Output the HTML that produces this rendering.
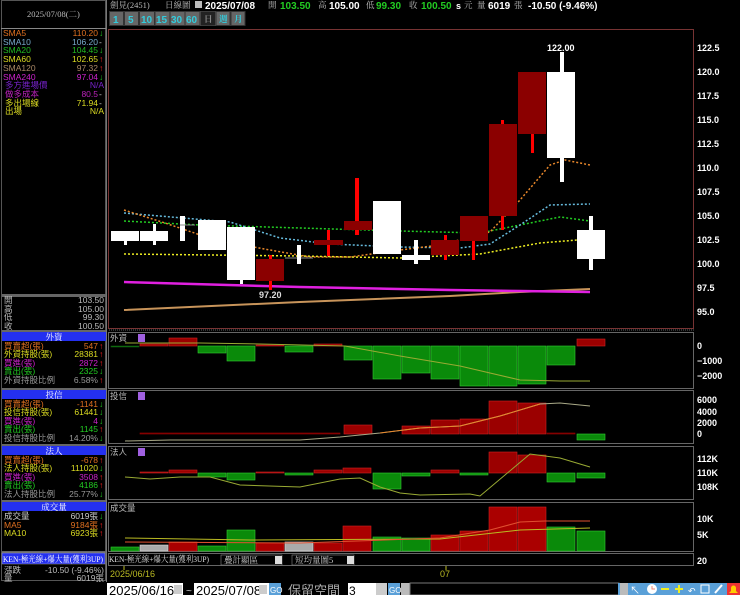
<!DOCTYPE html>
<html><head><meta charset="utf-8"><style>
html,body{margin:0;padding:0;background:#000;width:740px;height:595px;overflow:hidden}
svg{display:block}
text{font-family:"Liberation Sans","Noto Sans CJK TC",sans-serif}
.s{font-family:"Liberation Serif","Noto Serif CJK SC",serif;font-size:8.5px}
.ax{fill:#fff;font-size:9px;font-weight:bold}
</style></head><body>
<svg width="740" height="595" viewBox="0 0 740 595" xmlns="http://www.w3.org/2000/svg">
<rect width="740" height="595" fill="#000"/>
<rect x="1.5" y="0.5" width="104" height="580" fill="none" stroke="#555"/>
<line x1="106.5" y1="0" x2="106.5" y2="582" stroke="#777"/>
<text x="27" y="17" class="s" fill="#bbb">2025/07/08(二)</text>
<line x1="1" y1="28.5" x2="106" y2="28.5" stroke="#888"/>
<g class="s">
<text x="3" y="36" fill="#e07020">SMA5</text><text x="98" y="36" text-anchor="end" fill="#e07020">110.20</text><text x="99" y="36" fill="#2c2">↓</text>
<text x="3" y="45" fill="#7ac">SMA10</text><text x="98" y="45" text-anchor="end" fill="#7ac">106.20</text><text x="99" y="45" fill="#ccc">-</text>
<text x="3" y="53" fill="#2b2">SMA20</text><text x="98" y="53" text-anchor="end" fill="#2b2">104.45</text><text x="99" y="53" fill="#2c2">↓</text>
<text x="3" y="62" fill="#dd2">SMA60</text><text x="98" y="62" text-anchor="end" fill="#dd2">102.65</text><text x="99" y="62" fill="#f22">↑</text>
<text x="3" y="71" fill="#a86">SMA120</text><text x="98" y="71" text-anchor="end" fill="#a86">97.32</text><text x="99" y="71" fill="#f22">↑</text>
<text x="3" y="80" fill="#c2c">SMA240</text><text x="98" y="80" text-anchor="end" fill="#c2c">97.04</text><text x="99" y="80" fill="#2c2">↓</text>
<text x="5" y="88" fill="#72c">多方進場價</text><text x="104" y="88" text-anchor="end" fill="#72c">N/A</text>
<text x="5" y="97" fill="#b2b">做多成本</text><text x="98" y="97" text-anchor="end" fill="#b2b">80.5</text><text x="99" y="97" fill="#ccc">-</text>
<text x="5" y="106" fill="#dd2">多出場線</text><text x="98" y="106" text-anchor="end" fill="#dd2">71.94</text><text x="99" y="106" fill="#ccc">-</text>
<text x="5" y="114" fill="#dd2">出場</text><text x="104" y="114" text-anchor="end" fill="#dd2">N/A</text>
</g>
<rect x="2" y="294" width="104" height="3" fill="#666"/>
<g class="s" fill="#bbb">
<text x="4" y="303">開</text><text x="104" y="303" text-anchor="end">103.50</text>
<text x="4" y="312">高</text><text x="104" y="312" text-anchor="end">105.00</text>
<text x="4" y="320">低</text><text x="104" y="320" text-anchor="end">99.30</text>
<text x="4" y="329">收</text><text x="104" y="329" text-anchor="end">100.50</text>
</g>
<rect x="2" y="330" width="104" height="2" fill="#666"/>
<rect x="2" y="332" width="104" height="9" fill="#2430f0"/><text x="54" y="340" class="s" fill="#fff" text-anchor="middle">外資</text>
<g class="s">
<text x="4" y="349" fill="#e07020">買賣超(張)</text><text x="98" y="349" text-anchor="end" fill="#e07020">547</text><text x="99" y="349" fill="#f22">↑</text>
<text x="4" y="357" fill="#dd2">外資持股(張)</text><text x="98" y="357" text-anchor="end" fill="#dd2">28381</text><text x="99" y="357" fill="#f22">↑</text>
<text x="4" y="366" fill="#c2c">買進(張)</text><text x="98" y="366" text-anchor="end" fill="#c2c">2872</text><text x="99" y="366" fill="#f22">↑</text>
<text x="4" y="374" fill="#2c2">賣出(張)</text><text x="98" y="374" text-anchor="end" fill="#2c2">2325</text><text x="99" y="374" fill="#2c2">↓</text>
<text x="4" y="383" fill="#999">外資持股比例</text><text x="98" y="383" text-anchor="end" fill="#999">6.58%</text><text x="99" y="383" fill="#f22">↑</text>
</g>
<rect x="2" y="388" width="104" height="2" fill="#666"/>
<rect x="2" y="390" width="104" height="9" fill="#2430f0"/><text x="54" y="398" class="s" fill="#fff" text-anchor="middle">投信</text>
<g class="s">
<text x="4" y="407" fill="#e07020">買賣超(張)</text><text x="98" y="407" text-anchor="end" fill="#e07020">-1141</text><text x="99" y="407" fill="#2c2">↓</text>
<text x="4" y="415" fill="#dd2">投信持股(張)</text><text x="98" y="415" text-anchor="end" fill="#dd2">61441</text><text x="99" y="415" fill="#2c2">↓</text>
<text x="4" y="424" fill="#c2c">買進(張)</text><text x="98" y="424" text-anchor="end" fill="#c2c">4</text><text x="99" y="424" fill="#2c2">↓</text>
<text x="4" y="432" fill="#2c2">賣出(張)</text><text x="98" y="432" text-anchor="end" fill="#2c2">1145</text><text x="99" y="432" fill="#f22">↑</text>
<text x="4" y="441" fill="#999">投信持股比例</text><text x="98" y="441" text-anchor="end" fill="#999">14.20%</text><text x="99" y="441" fill="#2c2">↓</text>
</g>
<rect x="2" y="444" width="104" height="2" fill="#666"/>
<rect x="2" y="446" width="104" height="9" fill="#2430f0"/><text x="54" y="454" class="s" fill="#fff" text-anchor="middle">法人</text>
<g class="s">
<text x="4" y="463" fill="#e07020">買賣超(張)</text><text x="98" y="463" text-anchor="end" fill="#e07020">-678</text><text x="99" y="463" fill="#f22">↑</text>
<text x="4" y="471" fill="#dd2">法人持股(張)</text><text x="98" y="471" text-anchor="end" fill="#dd2">111020</text><text x="99" y="471" fill="#2c2">↓</text>
<text x="4" y="480" fill="#c2c">買進(張)</text><text x="98" y="480" text-anchor="end" fill="#c2c">3508</text><text x="99" y="480" fill="#f22">↑</text>
<text x="4" y="488" fill="#2c2">賣出(張)</text><text x="98" y="488" text-anchor="end" fill="#2c2">4186</text><text x="99" y="488" fill="#f22">↑</text>
<text x="4" y="497" fill="#999">法人持股比例</text><text x="98" y="497" text-anchor="end" fill="#999">25.77%</text><text x="99" y="497" fill="#2c2">↓</text>
</g>
<rect x="2" y="500" width="104" height="2" fill="#666"/>
<rect x="2" y="502" width="104" height="9" fill="#2430f0"/><text x="54" y="510" class="s" fill="#fff" text-anchor="middle">成交量</text>
<g class="s">
<text x="4" y="519" fill="#ccc">成交量</text><text x="98" y="519" text-anchor="end" fill="#ccc">6019張</text><text x="99" y="519" fill="#2c2">↓</text>
<text x="4" y="528" fill="#e07020">MA5</text><text x="98" y="528" text-anchor="end" fill="#e07020">9184張</text><text x="99" y="528" fill="#f22">↑</text>
<text x="4" y="536" fill="#dd2">MA10</text><text x="98" y="536" text-anchor="end" fill="#dd2">6923張</text><text x="99" y="536" fill="#f22">↑</text>
</g>
<rect x="2" y="551" width="104" height="2" fill="#666"/>
<rect x="2" y="553" width="103" height="11" fill="#2430f0" stroke="#aaa" stroke-width="0.5"/><text x="3" y="562" class="s" fill="#fff" textLength="100" lengthAdjust="spacingAndGlyphs">KEN-極光線+爆大量(獲利3UP)</text>
<g class="s" fill="#bbb"><text x="4" y="573">漲跌</text><text x="104" y="573" text-anchor="end">-10.50 (-9.46%)</text>
<text x="4" y="581">量</text><text x="104" y="581" text-anchor="end">6019張</text></g>

<text x="110" y="8" class="s" fill="#bbb">劍見(2451)</text>
<text x="165" y="8" class="s" fill="#bbb">日線圖</text>
<rect x="195" y="1" width="7" height="7" fill="#bbb"/>
<text x="205" y="9" font-size="10" font-weight="bold" fill="#fff">2025/07/08</text>
<text x="268" y="8" class="s" fill="#bbb">開</text><text x="280" y="9" font-size="10" font-weight="bold" fill="#2c2">103.50</text>
<text x="318" y="8" class="s" fill="#bbb">高</text><text x="329" y="9" font-size="10" font-weight="bold" fill="#fff">105.00</text>
<text x="366" y="8" class="s" fill="#bbb">低</text><text x="376" y="9" font-size="10" font-weight="bold" fill="#2c2">99.30</text>
<text x="409" y="8" class="s" fill="#bbb">收</text><text x="421" y="9" font-size="10" font-weight="bold" fill="#2c2">100.50</text>
<text x="456" y="9" font-size="9" font-weight="bold" fill="#fff">s</text><text x="464" y="8" class="s" fill="#bbb">元</text>
<text x="477" y="8" class="s" fill="#bbb">量</text><text x="488" y="9" font-size="10" font-weight="bold" fill="#fff">6019</text><text x="514" y="8" class="s" fill="#bbb">張</text>
<text x="528" y="9" font-size="10" font-weight="bold" fill="#fff">-10.50 (-9.46%)</text>
<g font-size="10" font-weight="bold" fill="#3cd">
<rect x="109" y="11" width="136" height="15" fill="#555"/>
<rect x="109.5" y="11.5" width="14" height="14" fill="#666" stroke="#333"/><text x="113" y="23">1</text>
<rect x="124.5" y="11.5" width="14" height="14" fill="#666" stroke="#333"/><text x="128" y="23">5</text>
<rect x="139.5" y="11.5" width="15" height="14" fill="#666" stroke="#333"/><text x="141" y="23">10</text>
<rect x="155" y="11.5" width="15" height="14" fill="#666" stroke="#333"/><text x="156" y="23">15</text>
<rect x="170" y="11.5" width="15" height="14" fill="#666" stroke="#333"/><text x="171" y="23">30</text>
<rect x="185" y="11.5" width="15" height="14" fill="#666" stroke="#333"/><text x="186" y="23">60</text>
<rect x="201" y="11.5" width="14" height="14" fill="#222"/><text x="204" y="22" class="s" fill="#888">日</text>
<rect x="216" y="11.5" width="14" height="14" fill="#666" stroke="#333"/><text x="219" y="22" class="s">週</text>
<rect x="231" y="11.5" width="14" height="14" fill="#666" stroke="#333"/><text x="234" y="22" class="s">月</text>
</g>

<rect x="108.5" y="29.5" width="585" height="299" fill="none" stroke="#733"/>
<g class="ax">
<text x="697" y="51">122.5</text><text x="697" y="75">120.0</text><text x="697" y="99">117.5</text><text x="697" y="123">115.0</text><text x="697" y="147">112.5</text><text x="697" y="171">110.0</text><text x="697" y="195">107.5</text><text x="697" y="219">105.0</text><text x="697" y="243">102.5</text><text x="697" y="267">100.0</text><text x="697" y="291">97.5</text><text x="697" y="315">95.0</text>
</g>
<line x1="109" y1="330" x2="694" y2="330" stroke="#666" stroke-dasharray="1 1"/>
<polyline points="124,310 300,302 450,296 520,292 590,289" fill="none" stroke="#c8945a" stroke-width="2"/>
<polyline points="124,282 300,287 450,290 520,291 590,292" fill="none" stroke="#e020e0" stroke-width="2.5"/>
<g fill="none" stroke-width="1.5" stroke-dasharray="2 2">
<polyline stroke="#ee2" points="124,254 300,256 400,258 480,254 540,243 590,239"/>
<polyline stroke="#2c2" points="124,221 200,225 300,228 400,231 480,233 520,225 560,217 590,221"/>
<polyline stroke="#6bd" points="124,213 230,222 280,238 330,244 400,247 460,248 490,244 520,225 550,205 590,204"/>
<polyline stroke="#e8872a" points="124,210 165,223 215,240 270,250 310,257 350,257 400,250 440,245 490,232 520,200 550,165 565,160 590,165"/>
</g>
<g>
<rect x="124" y="240" width="3" height="5" fill="#fff"/><rect x="111" y="231" width="28" height="10" fill="#fff"/>
<rect x="153" y="224" width="3" height="21" fill="#fff"/><rect x="140" y="231" width="28" height="10" fill="#fff"/>
<rect x="180" y="216" width="5" height="25" fill="#fff"/><line x1="180" y1="225" x2="195" y2="225" stroke="#888"/>
<rect x="198" y="220" width="28" height="30" fill="#fff"/>
<rect x="240" y="279" width="3" height="5" fill="#fff"/><rect x="227" y="227" width="28" height="53" fill="#fff"/>
<rect x="269" y="255" width="3" height="35" fill="#f00"/><rect x="256" y="259" width="28" height="22" fill="#8b0000"/>
<line x1="285" y1="258" x2="313" y2="258" stroke="#888"/><rect x="297" y="245" width="4" height="19" fill="#fff"/>
<rect x="327" y="230" width="3" height="26" fill="#f00"/><rect x="314" y="240" width="29" height="5" fill="#8b0000"/>
<rect x="355" y="178" width="4" height="57" fill="#f00"/><rect x="344" y="221" width="28" height="9" fill="#8b0000"/>
<rect x="373" y="201" width="28" height="53" fill="#fff"/>
<rect x="414" y="240" width="4" height="24" fill="#fff"/><rect x="402" y="255" width="28" height="5" fill="#fff"/>
<rect x="444" y="235" width="3" height="25" fill="#f00"/><rect x="431" y="240" width="28" height="15" fill="#8b0000"/>
<rect x="472" y="240" width="3" height="20" fill="#f00"/><rect x="460" y="216" width="28" height="25" fill="#8b0000"/>
<rect x="501" y="120" width="3" height="110" fill="#f00"/><rect x="489" y="124" width="28" height="92" fill="#8b0000"/>
<rect x="531" y="133" width="3" height="20" fill="#f00"/><rect x="518" y="72" width="28" height="62" fill="#8b0000"/>
<rect x="560" y="52" width="4" height="130" fill="#fff"/><rect x="547" y="72" width="28" height="86" fill="#fff"/>
<rect x="589" y="216" width="4" height="54" fill="#fff"/><rect x="577" y="230" width="28" height="29" fill="#fff"/>
</g>
<text x="547" y="51" font-size="9" font-weight="bold" fill="#fff">122.00</text>
<text x="259" y="298" font-size="9" font-weight="bold" fill="#ddd">97.20</text>

<g fill="none" stroke="#666">
<rect x="108.5" y="332.5" width="585" height="56"/>
<rect x="108.5" y="390.5" width="585" height="53"/>
<rect x="108.5" y="446.5" width="585" height="53"/>
<rect x="108.5" y="502.5" width="585" height="49"/>
<rect x="108.5" y="553.5" width="585" height="12"/>
</g>
<g class="s" fill="#bbb"><text x="110" y="341">外資</text><text x="110" y="399">投信</text><text x="110" y="455">法人</text><text x="110" y="511">成交量</text></g>
<g fill="#a060e0"><rect x="138" y="334" width="7" height="8"/><rect x="138" y="392" width="7" height="8"/><rect x="138" y="448" width="7" height="8"/></g>
<g class="ax"><text x="697" y="349">0</text><text x="697" y="364">−1000</text><text x="697" y="379">−2000</text>
<text x="697" y="403">6000</text><text x="697" y="415">4000</text><text x="697" y="426">2000</text><text x="697" y="437">0</text>
<text x="697" y="462">112K</text><text x="697" y="476">110K</text><text x="697" y="490">108K</text>
<text x="697" y="522">10K</text><text x="697" y="538">5K</text><text x="697" y="564">20</text></g>
<g stroke-width="0.6">
<g fill="#0a8a0a" stroke="#3c3">
<rect x="111" y="346" width="28" height="1" stroke="#151"/>
<rect x="198" y="346" width="28" height="7"/><rect x="227" y="346" width="28" height="15"/><rect x="285" y="346" width="28" height="6"/>
<rect x="344" y="346" width="28" height="14"/><rect x="373" y="346" width="28" height="33"/><rect x="402" y="346" width="28" height="27"/>
<rect x="431" y="346" width="28" height="33"/><rect x="460" y="346" width="28" height="40"/><rect x="489" y="346" width="28" height="40"/>
<rect x="518" y="346" width="28" height="38"/><rect x="547" y="346" width="28" height="19"/></g>
<g fill="#9b0000" stroke="#c22">
<rect x="140" y="344" width="28" height="2"/><rect x="169" y="338" width="28" height="8"/><rect x="256" y="345" width="28" height="1"/>
<rect x="314" y="344" width="28" height="2"/><rect x="577" y="339" width="28" height="7"/></g>
</g>
<polyline points="125,343 200,343 260,344 345,346 400,356 460,366 520,380 560,381 590,381" fill="none" stroke="#9a3" stroke-width="1"/>
<g stroke-width="0.6">
<g fill="#600" stroke="#900"><rect x="140" y="433" width="200" height="1"/><rect x="547" y="433" width="28" height="1"/></g>
<g fill="#9b0000" stroke="#c22">
<rect x="344" y="425" width="28" height="9"/><rect x="402" y="426" width="28" height="8"/><rect x="431" y="420" width="28" height="14"/>
<rect x="460" y="419" width="28" height="15"/><rect x="489" y="401" width="28" height="33"/><rect x="518" y="403" width="28" height="31"/></g>
<rect x="577" y="434" width="28" height="6" fill="#0a8a0a" stroke="#3c3"/>
</g>
<polyline points="125,441 170,440 300,440 340,437 380,433 420,428 460,426 500,416 540,404 560,403 590,406" fill="none" stroke="#aa8" stroke-width="1"/>
<polyline points="380,433 420,428 460,426 500,416 540,404" fill="none" stroke="#e8872a" stroke-width="1"/>
<g stroke-width="0.6">
<g fill="#9b0000" stroke="#c22">
<rect x="140" y="472" width="28" height="1"/><rect x="169" y="470" width="28" height="3"/><rect x="256" y="472" width="28" height="1"/>
<rect x="314" y="470" width="28" height="3"/><rect x="343" y="468" width="28" height="5"/><rect x="431" y="470" width="28" height="3"/>
<rect x="489" y="452" width="28" height="21"/><rect x="518" y="455" width="28" height="18"/></g>
<g fill="#0a8a0a" stroke="#3c3">
<rect x="198" y="473" width="28" height="4"/><rect x="227" y="473" width="28" height="7"/><rect x="285" y="473" width="28" height="2"/>
<rect x="373" y="473" width="28" height="16"/><rect x="402" y="473" width="28" height="3"/><rect x="460" y="473" width="28" height="2"/>
<rect x="547" y="473" width="28" height="9"/><rect x="577" y="473" width="28" height="5"/></g>
</g>
<polyline points="125,477 150,479 180,477 210,477 240,485 300,487 340,479 360,478 380,487 400,493 420,495 470,494 480,496 530,454 560,458 590,467" fill="none" stroke="#9a3" stroke-width="1"/>
<g stroke-width="0.6">
<g fill="#0a8a0a" stroke="#3c3">
<rect x="111" y="547" width="28" height="4"/><rect x="198" y="546" width="28" height="5"/><rect x="227" y="530" width="28" height="21"/>
<rect x="373" y="537" width="28" height="14"/><rect x="402" y="538" width="28" height="13"/><rect x="547" y="527" width="28" height="24"/><rect x="577" y="531" width="28" height="20"/></g>
<g fill="#aaa" stroke="#ddd"><rect x="140" y="545" width="28" height="6"/><rect x="285" y="542" width="28" height="9"/></g>
<g fill="#a00" stroke="#c22">
<rect x="169" y="542" width="28" height="9"/><rect x="256" y="543" width="28" height="8"/><rect x="314" y="543" width="28" height="8"/>
<rect x="343" y="526" width="28" height="25"/><rect x="431" y="535" width="28" height="16"/><rect x="460" y="531" width="28" height="20"/>
<rect x="489" y="507" width="28" height="44"/><rect x="518" y="507" width="28" height="44"/></g>
</g>
<polyline points="125,538 250,540 440,539 520,530 590,528" fill="none" stroke="#bb2" stroke-width="1"/>
<polyline points="125,542 300,543 440,538 490,530 520,522 545,521 590,521" fill="none" stroke="#e05030" stroke-width="1"/>
<text x="109" y="562" class="s" fill="#ddd" textLength="100" lengthAdjust="spacingAndGlyphs">KEN-極光線+爆大量(獲利3UP)</text>
<rect x="221" y="555" width="61" height="10" fill="#000" stroke="#888" stroke-width="0.6"/><text x="224" y="563" class="s" fill="#ccc">疊計顯區</text><rect x="275" y="556" width="7" height="8" fill="#ddd"/>
<rect x="292" y="555" width="62" height="10" fill="#000" stroke="#888" stroke-width="0.6"/><text x="295" y="563" class="s" fill="#ccc">短均量圖5</text><rect x="347" y="556" width="7" height="8" fill="#ddd"/>
<line x1="124" y1="566" x2="124" y2="570" stroke="#bb2"/><line x1="446" y1="566" x2="446" y2="570" stroke="#bb2"/>
<text x="110" y="577" font-size="9" fill="#bb2">2025/06/16</text><text x="440" y="577" font-size="9" fill="#bb2">07</text>
<rect x="107" y="582" width="633" height="13" fill="#000"/>
<rect x="107" y="583" width="76" height="12" fill="#fff"/><text x="109" y="595" font-size="13" fill="#000" font-family="Liberation Serif">2025/06/16</text><rect x="174" y="585" width="8" height="9" fill="#ccc"/>
<text x="186" y="594" font-size="10" fill="#ccc">~</text>
<rect x="194" y="583" width="75" height="12" fill="#fff"/><text x="196" y="595" font-size="13" fill="#000" font-family="Liberation Serif">2025/07/08</text><rect x="259" y="585" width="8" height="9" fill="#ccc"/>
<rect x="269" y="583" width="12" height="12" fill="#5aa0d8"/><text x="270" y="593" font-size="8" fill="#fff">GO</text>
<text x="288" y="595" font-size="13" fill="#aaa" font-family="Noto Sans CJK TC,sans-serif">保留空間</text>
<rect x="348" y="583" width="28" height="12" fill="#fff"/><text x="349" y="595" font-size="12" fill="#000" font-family="Liberation Serif">3</text><rect x="376" y="583" width="11" height="12" fill="#ccc"/>
<rect x="388" y="583" width="12" height="12" fill="#5aa0d8"/><text x="389" y="593" font-size="8" fill="#fff">GO</text>
<rect x="401" y="583" width="9" height="12" fill="#bbb"/>
<rect x="410" y="583" width="209" height="12" fill="#000" stroke="#777"/>
<rect x="618" y="583" width="122" height="12" fill="#5aa0d8"/>
<rect x="620" y="583" width="8" height="12" fill="#bbb"/>
<text x="630" y="594" font-size="10" fill="#fff">↖</text>
<circle cx="652" cy="589" r="5" fill="#fff"/><path d="M652 586v3h3" stroke="#e87" fill="none"/>
<rect x="661" y="588" width="8" height="2" fill="#ee2"/>
<rect x="675" y="588" width="8" height="2" fill="#ee2"/><rect x="678" y="585" width="2" height="8" fill="#ee2"/>
<text x="688" y="594" font-size="9" fill="#fff">↶</text>
<rect x="701" y="585" width="8" height="8" fill="none" stroke="#fff"/>
<path d="M715 593l7-8" stroke="#fff" stroke-width="2"/>
<rect x="727" y="583" width="13" height="12" fill="#e33"/><path d="M729 593h9l-2-2v-3a2.5 2.5 0 0 0-5 0v3z" fill="#fc0"/>
</svg>
</body></html>
